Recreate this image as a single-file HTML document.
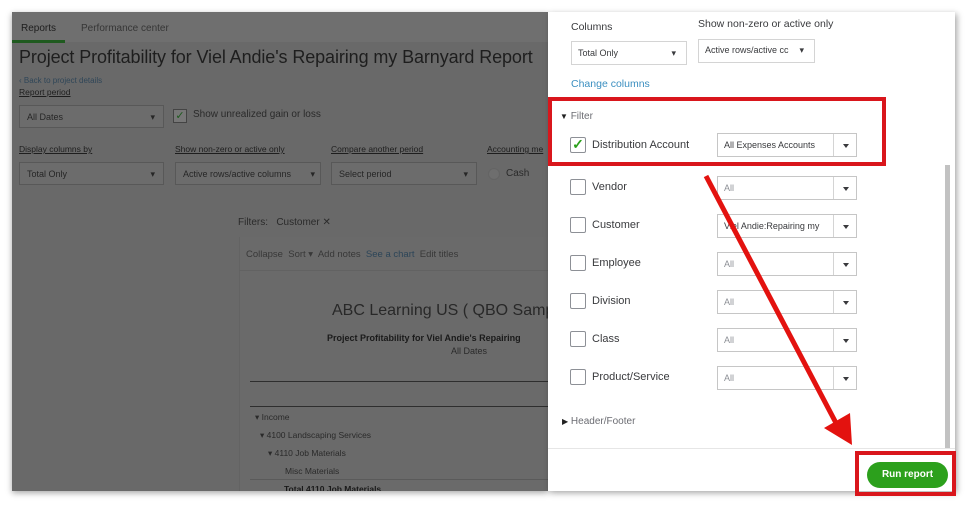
<!DOCTYPE html>
<html><head><meta charset="utf-8"><style>
*{box-sizing:border-box;margin:0;padding:0}
body{width:971px;height:512px;background:#fff;font-family:"Liberation Sans",sans-serif;position:relative;overflow:hidden}
.a{position:absolute;white-space:nowrap}
#bg{left:12px;top:12px;width:536px;height:479px;background:#696969;box-shadow:0 2px 6px rgba(0,0,0,.35);overflow:hidden}
.t{color:#2a2a2a;font-size:9px}
.sel{position:absolute;border:1px solid #585858;background:#6c6c6c;height:23px;font-size:9px;color:#262626;padding:6px 7px}
#panel{left:548px;top:12px;width:407px;height:479px;background:#fff;box-shadow:2px 2px 6px rgba(0,0,0,.35)}
.cb{position:absolute;left:22px;width:16px;height:16px;border:1px solid #8d9096;border-radius:2px;background:#fff}
.lab{position:absolute;left:44px;font-size:11px;color:#393a3d}
.dd{position:absolute;left:169px;width:140px;height:24px;border:1px solid #c6c6c6;font-size:9px;color:#8d9096;padding:6px 6px}
.dd:after{content:"";position:absolute;right:0;top:0;width:22px;height:22px;border-left:1px solid #d4d4d4}
.dd b{position:absolute;right:7px;top:10px;border:3px solid transparent;border-top:4px solid #393a3d;z-index:2}
</style></head><body>
<div id="bg" class="a">
 <div class="a" style="left:0;top:0;width:536px;height:30px;background:#6f6f6f"></div>
 <div class="a t" style="left:9px;top:11px;font-size:10px;color:#1e1e1e">Reports</div>
 <div class="a" style="left:0;top:28px;width:53px;height:3px;background:#1f5a1f"></div>
 <div class="a t" style="left:69px;top:11px;font-size:10px;color:#363636">Performance center</div>
 <div class="a" style="left:7px;top:35px;font-size:18px;color:#1e1e1e;letter-spacing:-0.1px">Project Profitability for Viel Andie's Repairing my Barnyard Report</div>
 <div class="a t" style="left:7px;top:64px;font-size:8px;color:#2f4658">&#8249; Back to project details</div>
 <div class="a t" style="left:7px;top:75px;font-size:8.5px;color:#1e1e1e;text-decoration:underline">Report period</div>
 <div class="sel" style="left:7px;top:93px;width:145px">All Dates<span style="position:absolute;right:8px">&#9662;</span></div>
 <div class="a" style="left:161px;top:97px;width:14px;height:14px;border:1px solid #444;background:#777;color:#1d5a1d;font-size:11px;line-height:12px;text-align:center">&#10003;</div>
 <div class="a t" style="left:181px;top:97px;font-size:10px">Show unrealized gain or loss</div>
 <div class="a t" style="left:7px;top:132px;font-size:8.5px;color:#1e1e1e;text-decoration:underline">Display columns by</div>
 <div class="a t" style="left:163px;top:132px;font-size:8.5px;color:#1e1e1e;text-decoration:underline">Show non-zero or active only</div>
 <div class="a t" style="left:319px;top:132px;font-size:8.5px;color:#1e1e1e;text-decoration:underline">Compare another period</div>
 <div class="a t" style="left:475px;top:132px;font-size:8.5px;color:#1e1e1e;text-decoration:underline">Accounting me</div>
 <div class="sel" style="left:7px;top:150px;width:145px">Total Only<span style="position:absolute;right:8px">&#9662;</span></div>
 <div class="sel" style="left:163px;top:150px;width:146px">Active rows/active columns<span style="position:absolute;right:5px">&#9662;</span></div>
 <div class="sel" style="left:319px;top:150px;width:146px">Select period<span style="position:absolute;right:8px">&#9662;</span></div>
 <div class="a" style="left:476px;top:156px;width:12px;height:12px;border-radius:50%;background:#6e6e6e;border:1px solid #646464"></div>
 <div class="a t" style="left:494px;top:156px;font-size:10px">Cash</div>
 <div class="a t" style="left:226px;top:205px;font-size:10px">Filters:&nbsp;&nbsp; Customer &#10005;</div>
 <div class="a" style="left:227px;top:225px;width:309px;height:254px;border-left:1px solid #636363;background:#6a6a6a"></div>
 <div class="a" style="left:227px;top:258px;width:309px;height:1px;background:#626262"></div>
 <div class="a t" style="left:234px;top:237px;font-size:9.5px;color:#383838">Collapse&nbsp; Sort &#9662;&nbsp; Add notes&nbsp; <span style="color:#2c4558">See a chart</span>&nbsp; Edit titles</div>
 <div class="a" style="left:320px;top:290px;font-size:16px;color:#282828">ABC Learning US ( QBO Samp</div>
 <div class="a" style="left:315px;top:321px;font-size:9px;font-weight:bold;color:#1a1a1a">Project Profitability for Viel Andie's Repairing</div>
 <div class="a t" style="left:439px;top:334px;font-size:9px">All Dates</div>
 <div class="a" style="left:238px;top:369px;width:298px;height:1px;background:#2e2e2e"></div>
 <div class="a" style="left:238px;top:394px;width:298px;height:1px;background:#2e2e2e"></div>
 <div class="a t" style="left:243px;top:400px;font-size:8.5px">&#9662; Income</div>
 <div class="a t" style="left:248px;top:418px;font-size:8.5px">&#9662; 4100 Landscaping Services</div>
 <div class="a t" style="left:256px;top:436px;font-size:8.5px">&#9662; 4110 Job Materials</div>
 <div class="a t" style="left:273px;top:454px;font-size:8.5px">Misc Materials</div>
 <div class="a" style="left:238px;top:467px;width:298px;height:1px;background:#5a5a5a"></div>
 <div class="a t" style="left:272px;top:472px;font-size:8.5px;font-weight:bold;color:#1a1a1a">Total 4110 Job Materials</div>
</div>
<div id="panel" class="a">
 <div class="a" style="left:23px;top:9px;font-size:10.5px;color:#393a3d">Columns</div>
 <div class="a" style="left:150px;top:6px;font-size:10.5px;color:#393a3d">Show non-zero or active only</div>
 <div class="a" style="left:23px;top:29px;width:116px;height:24px;border:1px solid #d4d4d4;font-size:9px;color:#393a3d;padding:6px 6px">Total Only<span style="position:absolute;right:10px">&#9662;</span></div>
 <div class="a" style="left:150px;top:27px;width:117px;height:24px;border:1px solid #d4d4d4;font-size:9px;color:#393a3d;padding:5px 6px">Active rows/active cc<span style="position:absolute;right:10px">&#9662;</span></div>
 <div class="a" style="left:23px;top:66px;font-size:10.5px;color:#3b8fc0">Change columns</div>
 <div class="a" style="left:12px;top:99px;font-size:10px;color:#6b6c72"><span style="font-size:8px;color:#222">&#9660;</span> Filter</div>
 <div class="cb" style="top:125px;color:#2ca01c;font-size:14px;line-height:13px;text-align:center;font-weight:bold">&#10003;</div>
 <div class="lab" style="top:127px">Distribution Account</div>
 <div class="dd" style="top:121px;color:#393a3d">All Expenses Accounts<b></b></div>
 <div class="cb" style="top:167px"></div><div class="lab" style="top:169px">Vendor</div><div class="dd" style="top:164px">All<b></b></div>
 <div class="cb" style="top:205px"></div><div class="lab" style="top:207px">Customer</div><div class="dd" style="top:202px;color:#393a3d">Viel Andie:Repairing my<b></b></div>
 <div class="cb" style="top:243px"></div><div class="lab" style="top:245px">Employee</div><div class="dd" style="top:240px">All<b></b></div>
 <div class="cb" style="top:281px"></div><div class="lab" style="top:283px">Division</div><div class="dd" style="top:278px">All<b></b></div>
 <div class="cb" style="top:319px"></div><div class="lab" style="top:321px">Class</div><div class="dd" style="top:316px">All<b></b></div>
 <div class="cb" style="top:357px"></div><div class="lab" style="top:359px">Product/Service</div><div class="dd" style="top:354px">All<b></b></div>
 <div class="a" style="left:14px;top:404px;font-size:10px;color:#6b6c72"><span style="font-size:8px;color:#222">&#9654;</span> Header/Footer</div>
 <div class="a" style="left:397px;top:153px;width:5px;height:284px;background:#c2c2c2"></div>
 <div class="a" style="left:0;top:436px;width:407px;height:1px;background:#e6e6e6"></div>
 <div class="a" style="left:319px;top:450px;width:81px;height:26px;border-radius:13px;background:#2ca01c;color:#fff;font-size:10px;font-weight:bold;text-align:center;line-height:26px">Run report</div>
</div>
<div class="a" style="left:548px;top:97px;width:338px;height:69px;border:4px solid #d9161c"></div>
<div class="a" style="left:855px;top:451px;width:101px;height:45px;border:4px solid #d9161c"></div>
<svg class="a" style="left:0;top:0" width="971" height="512">
 <line x1="706" y1="176" x2="836" y2="423" stroke="#e3120f" stroke-width="5"/>
 <polygon points="824,428 852,445 850,413" fill="#e3120f"/>
</svg>
</body></html>
